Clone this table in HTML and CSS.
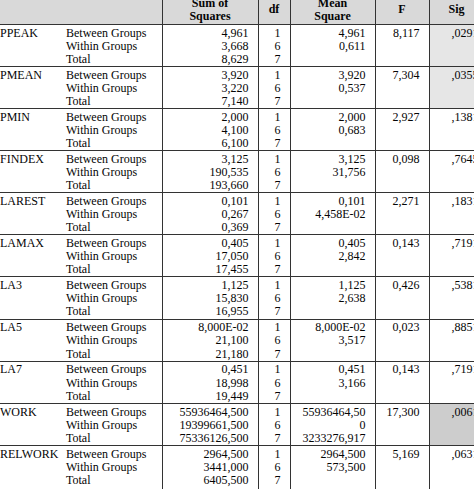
FILE: index.html
```html
<!DOCTYPE html>
<html>
<head>
<meta charset="utf-8">
<link rel="stylesheet" href="styles.css">
</head>
<body>
<table class="anova">
<colgroup>
<col class="c-var"><col class="c-lab"><col class="c-sum"><col class="c-df"><col class="c-mean"><col class="c-f"><col class="c-sig">
</colgroup>
<thead>
<tr>
<th colspan="2" class="h-blank"></th>
<th>Sum of<br>Squares</th>
<th>df</th>
<th>Mean<br>Square</th>
<th>F</th>
<th>Sig</th>
</tr>
</thead>
<tbody>
<tr>
<td class="var">PPEAK</td>
<td class="lab"><div>Between Groups</div><div>Within Groups</div><div>Total</div></td>
<td class="num"><div>4,961</div><div>3,668</div><div>8,629</div></td>
<td class="num"><div>1</div><div>6</div><div>7</div></td>
<td class="num"><div>4,961</div><div>0,611</div></td>
<td class="num"><div>8,117</div></td>
<td class="num sig sig-light"><div>,0291</div></td>
</tr>
<tr>
<td class="var">PMEAN</td>
<td class="lab"><div>Between Groups</div><div>Within Groups</div><div>Total</div></td>
<td class="num"><div>3,920</div><div>3,220</div><div>7,140</div></td>
<td class="num"><div>1</div><div>6</div><div>7</div></td>
<td class="num"><div>3,920</div><div>0,537</div></td>
<td class="num"><div>7,304</div></td>
<td class="num sig sig-light"><div>,0355</div></td>
</tr>
<tr>
<td class="var">PMIN</td>
<td class="lab"><div>Between Groups</div><div>Within Groups</div><div>Total</div></td>
<td class="num"><div>2,000</div><div>4,100</div><div>6,100</div></td>
<td class="num"><div>1</div><div>6</div><div>7</div></td>
<td class="num"><div>2,000</div><div>0,683</div></td>
<td class="num"><div>2,927</div></td>
<td class="num sig"><div>,1381</div></td>
</tr>
<tr>
<td class="var">FINDEX</td>
<td class="lab"><div>Between Groups</div><div>Within Groups</div><div>Total</div></td>
<td class="num"><div>3,125</div><div>190,535</div><div>193,660</div></td>
<td class="num"><div>1</div><div>6</div><div>7</div></td>
<td class="num"><div>3,125</div><div>31,756</div></td>
<td class="num"><div>0,098</div></td>
<td class="num sig"><div>,7645</div></td>
</tr>
<tr>
<td class="var">LAREST</td>
<td class="lab"><div>Between Groups</div><div>Within Groups</div><div>Total</div></td>
<td class="num"><div>0,101</div><div>0,267</div><div>0,369</div></td>
<td class="num"><div>1</div><div>6</div><div>7</div></td>
<td class="num"><div>0,101</div><div>4,458E-02</div></td>
<td class="num"><div>2,271</div></td>
<td class="num sig"><div>,1831</div></td>
</tr>
<tr>
<td class="var">LAMAX</td>
<td class="lab"><div>Between Groups</div><div>Within Groups</div><div>Total</div></td>
<td class="num"><div>0,405</div><div>17,050</div><div>17,455</div></td>
<td class="num"><div>1</div><div>6</div><div>7</div></td>
<td class="num"><div>0,405</div><div>2,842</div></td>
<td class="num"><div>0,143</div></td>
<td class="num sig"><div>,7191</div></td>
</tr>
<tr>
<td class="var">LA3</td>
<td class="lab"><div>Between Groups</div><div>Within Groups</div><div>Total</div></td>
<td class="num"><div>1,125</div><div>15,830</div><div>16,955</div></td>
<td class="num"><div>1</div><div>6</div><div>7</div></td>
<td class="num"><div>1,125</div><div>2,638</div></td>
<td class="num"><div>0,426</div></td>
<td class="num sig"><div>,5381</div></td>
</tr>
<tr>
<td class="var">LA5</td>
<td class="lab"><div>Between Groups</div><div>Within Groups</div><div>Total</div></td>
<td class="num"><div>8,000E-02</div><div>21,100</div><div>21,180</div></td>
<td class="num"><div>1</div><div>6</div><div>7</div></td>
<td class="num"><div>8,000E-02</div><div>3,517</div></td>
<td class="num"><div>0,023</div></td>
<td class="num sig"><div>,8851</div></td>
</tr>
<tr>
<td class="var">LA7</td>
<td class="lab"><div>Between Groups</div><div>Within Groups</div><div>Total</div></td>
<td class="num"><div>0,451</div><div>18,998</div><div>19,449</div></td>
<td class="num"><div>1</div><div>6</div><div>7</div></td>
<td class="num"><div>0,451</div><div>3,166</div></td>
<td class="num"><div>0,143</div></td>
<td class="num sig"><div>,7191</div></td>
</tr>
<tr>
<td class="var">WORK</td>
<td class="lab"><div>Between Groups</div><div>Within Groups</div><div>Total</div></td>
<td class="num"><div>55936464,500</div><div>19399661,500</div><div>75336126,500</div></td>
<td class="num"><div>1</div><div>6</div><div>7</div></td>
<td class="num"><div>55936464,50</div><div>0</div><div>3233276,917</div></td>
<td class="num"><div>17,300</div></td>
<td class="num sig sig-dark"><div>,0061</div></td>
</tr>
<tr>
<td class="var">RELWORK</td>
<td class="lab"><div>Between Groups</div><div>Within Groups</div><div>Total</div></td>
<td class="num"><div>2964,500</div><div>3441,000</div><div>6405,500</div></td>
<td class="num"><div>1</div><div>6</div><div>7</div></td>
<td class="num"><div>2964,500</div><div>573,500</div></td>
<td class="num"><div>5,169</div></td>
<td class="num sig"><div>,0631</div></td>
</tr>
</tbody>
</table>
</body>
</html>
```

FILE: styles.css
```css
html, body {
  margin: 0;
  padding: 0;
  background: #ffffff;
  overflow: hidden;
}
body {
  font-family: "Liberation Serif", "Times New Roman", serif;
  font-size: 12px;
  color: #050505;
}
.anova {
  table-layout: fixed;
  width: 484px;
  border-collapse: collapse;
  margin-top: -4px;
}
.c-var { width: 66px; }
.c-lab { width: 96px; }
.c-sum { width: 96px; }
.c-df { width: 32px; }
.c-mean { width: 85px; }
.c-f { width: 54px; }
.c-sig { width: 55px; }

.anova th {
  background: #d9d9d9;
  font-weight: bold;
  font-size: 12px;
  line-height: 13.5px;
  height: 28px;
  padding: 0;
  text-align: center;
  vertical-align: middle;
  border-right: 1px solid #333333;
  border-bottom: 1px solid #333333;
}
.anova td {
  padding: 1.8px 0 0 0;
  vertical-align: top;
  line-height: 13.1px;
  border-bottom: 1px solid #333333;
  white-space: nowrap;
}
.anova tbody tr:last-child td {
  border-bottom: none;
  padding-bottom: 4px;
}
.anova td.var {
  padding-left: 0;
}
.anova td.lab {
  border-right: 1px solid #333333;
}
.anova td.num {
  text-align: right;
  padding-right: 9px;
  border-right: 1px solid #333333;
}
.anova td.sig {
  padding-right: 5px;
}
.sig-light {
  background: #e6e6e6;
}
.sig-dark {
  background: #cdcdcd;
}
```
